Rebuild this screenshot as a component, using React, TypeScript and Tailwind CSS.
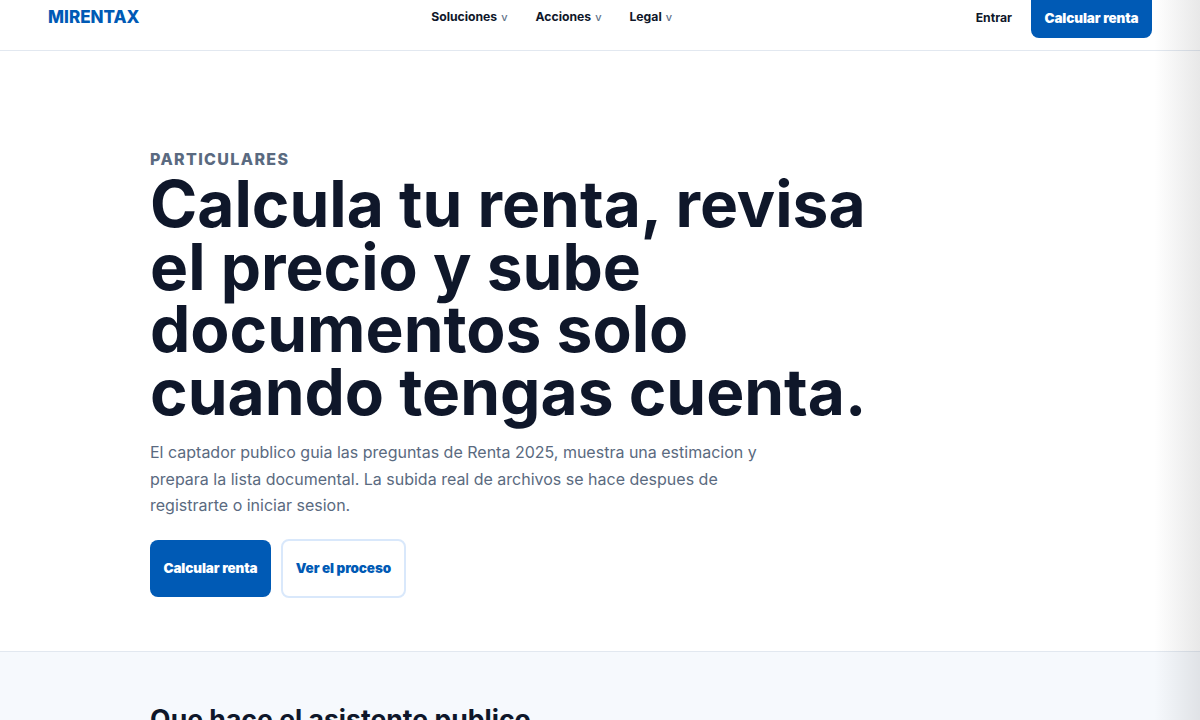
import React from "react";

function NavItem({ label }: { label: string }) {
  return (
    <button className="flex items-center gap-[4px] text-[12.2px] font-bold text-[#0f172a]">
      <span>{label}</span>
      <span className="text-[11px] font-medium leading-[14px] text-[#64748b]">v</span>
    </button>
  );
}

export default function App() {
  return (
    <div className="relative h-[720px] w-[1200px] overflow-hidden bg-white font-['Inter',sans-serif]">
      <header className="flex h-[51px] items-start justify-between border-b border-[#e2e8f0] pl-[48px] pr-[48px]">
        <div className="pt-[8px] text-[17px] leading-[18px] font-extrabold text-[#005ab5]">MIRENTAX</div>
        <nav className="flex items-center gap-[28px] pt-[8px] pr-[12px] leading-[18px]">
          <NavItem label="Soluciones" />
          <NavItem label="Acciones" />
          <NavItem label="Legal" />
        </nav>
        <div className="flex items-center gap-[19px]">
          <span className="pb-[2px] text-[12.2px] font-bold text-[#0f172a]">Entrar</span>
          <span className="flex h-[38px] w-[121px] items-center justify-center rounded-b-[8px] bg-[#005ab5] pb-[2px] text-[13.5px] font-black tracking-[-0.1px] text-white">Calcular renta</span>
        </div>
      </header>
      <main className="h-[601px] border-b border-[#e2e8f0] pl-[150px] pt-[99px]">
        <p className="text-[16px] leading-[19px] font-extrabold tracking-[1.35px] text-[#5a6a80]">PARTICULARES</p>
        <h1 className="mt-[4px] w-[760px] text-[64px] leading-[62.72px] font-bold text-[#0f172a]">
          Calcula tu renta, revisa el precio y sube documentos solo cuando tengas cuenta.
        </h1>
        <p className="mt-[15.6px] w-[640px] text-[16px] leading-[26.5px] text-[#5a6a80]">
          El captador publico guia las preguntas de Renta 2025, muestra una estimacion y prepara la lista documental. La subida real de archivos se hace despues de registrarte o iniciar sesion.
        </p>
        <div className="mt-[20.4px] flex items-center gap-[10px]">
          <span className="flex h-[57px] w-[121px] items-center justify-center rounded-[8px] bg-[#005ab5] pb-[1px] text-[13.5px] font-black tracking-[-0.1px] text-white">Calcular renta</span>
          <span className="flex h-[59px] w-[125px] items-center justify-center rounded-[8px] border-2 border-[#d9e8fb] pb-[1px] text-[13.5px] font-black tracking-[-0.1px] text-[#005ab5]">Ver el proceso</span>
        </div>
      </main>
      <section className="bg-[#f6f9fd] pl-[150px] pt-[52px]">
        <h2 className="text-[26.6px] leading-[30px] font-bold text-[#0f172a]">Que hace el asistente publico</h2>
      </section>
      <div className="pointer-events-none absolute inset-y-0 right-0 w-[46px] bg-gradient-to-l from-[#18181b]/10 to-transparent" />
    </div>
  );
}
